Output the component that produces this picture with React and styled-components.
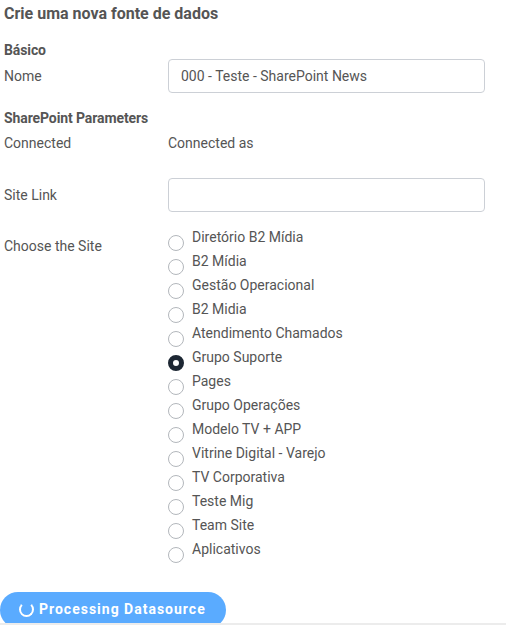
import React from "react";
import styled, { createGlobalStyle, keyframes } from "styled-components";

const GlobalStyle = createGlobalStyle`
  body {
    margin: 0;
    background: #fff;
    font-family: Roboto, "Liberation Sans", sans-serif;
    color: #555;
  }
`;

const Page = styled.div`
  width: 506px;
  height: 625px;
  overflow: hidden;
  position: relative;
  border-bottom: 2px solid #ececec;
  box-sizing: border-box;
`;

const Form = styled.div`
  padding: 4px 21px 0 4px;
`;

const Title = styled.h2`
  margin: 0 0 18px;
  font-size: 16px;
  font-weight: 700;
  line-height: 19px;
  color: #555;
`;

const Section = styled.h3`
  margin: ${(p) => p.$top || 0}px 0 0;
  font-size: 14px;
  font-weight: 700;
  line-height: 18px;
  letter-spacing: -0.1px;
  color: #555;
`;

const Row = styled.div`
  display: grid;
  grid-template-columns: 164px 1fr;
  align-items: ${(p) => (p.$top ? "start" : "center")};
  margin-top: ${(p) => p.$mt || 0}px;
  font-size: 14px;
`;

const Label = styled.span`
  color: #555;
  line-height: 18px;
  padding-top: ${(p) => p.$pt || 0}px;
`;

const Input = styled.input`
  height: 34px;
  box-sizing: border-box;
  border: 1px solid #ccd0d6;
  border-radius: 4px;
  padding: 0 12px;
  font-family: inherit;
  font-size: 14px;
  color: #555;
  outline: none;
`;

const RadioList = styled.div`
  display: flex;
  flex-direction: column;
`;

const RadioItem = styled.label`
  display: flex;
  align-items: flex-start;
  height: 24px;
  font-size: 14px;
  color: #555;
  line-height: 18px;
`;

const Circle = styled.span`
  width: 16px;
  height: 16px;
  box-sizing: border-box;
  border-radius: 50%;
  margin-top: 7px;
  margin-right: 8px;
  flex: none;
  border: ${(p) => (p.$checked ? "5px solid #1d2733" : "1px solid #b3b7bc")};
  background: #fff;
`;

const ButtonBar = styled.div`
  margin-top: 28px;
`;

const spin = keyframes`
  to { transform: rotate(360deg); }
`;

const Button = styled.button`
  display: flex;
  align-items: center;
  gap: 5px;
  height: 36px;
  width: 226px;
  padding: 0 0 2px 19px;
  border: none;
  border-radius: 18px;
  background: #5aabff;
  color: #fff;
  font-family: Roboto, "Liberation Sans", sans-serif;
  font-size: 14px;
  font-weight: 700;
  letter-spacing: 1px;
  cursor: pointer;
`;

const Spinner = styled.span`
  width: 11px;
  height: 11px;
  border: 2px solid #fff;
  border-top-color: transparent;
  border-radius: 50%;
  animation: ${spin} 1s linear infinite;
  animation-play-state: paused;
`;

const sites = [
  "Diretório B2 Mídia",
  "B2 Mídia",
  "Gestão Operacional",
  "B2 Midia",
  "Atendimento Chamados",
  "Grupo Suporte",
  "Pages",
  "Grupo Operações",
  "Modelo TV + APP",
  "Vitrine Digital - Varejo",
  "TV Corporativa",
  "Teste Mig",
  "Team Site",
  "Aplicativos",
];

export default function App() {
  return (
    <Page>
      <GlobalStyle />
      <Form>
        <Title>Crie uma nova fonte de dados</Title>
        <Section>Básico</Section>
        <Row $mt={0}>
          <Label>Nome</Label>
          <Input defaultValue="000 - Teste - SharePoint News" />
        </Row>
        <Section $top={16}>SharePoint Parameters</Section>
        <Row $mt={7}>
          <Label>Connected</Label>
          <Label>Connected as</Label>
        </Row>
        <Row $mt={26}>
          <Label>Site Link</Label>
          <Input />
        </Row>
        <Row $top $mt={16}>
          <Label $pt={9}>Choose the Site</Label>
          <RadioList>
            {sites.map((s) => (
              <RadioItem key={s}>
                <Circle $checked={s === "Grupo Suporte"} />
                {s}
              </RadioItem>
            ))}
          </RadioList>
        </Row>
      </Form>
      <ButtonBar>
        <Button>
          <Spinner />
          Processing Datasource
        </Button>
      </ButtonBar>
    </Page>
  );
}
